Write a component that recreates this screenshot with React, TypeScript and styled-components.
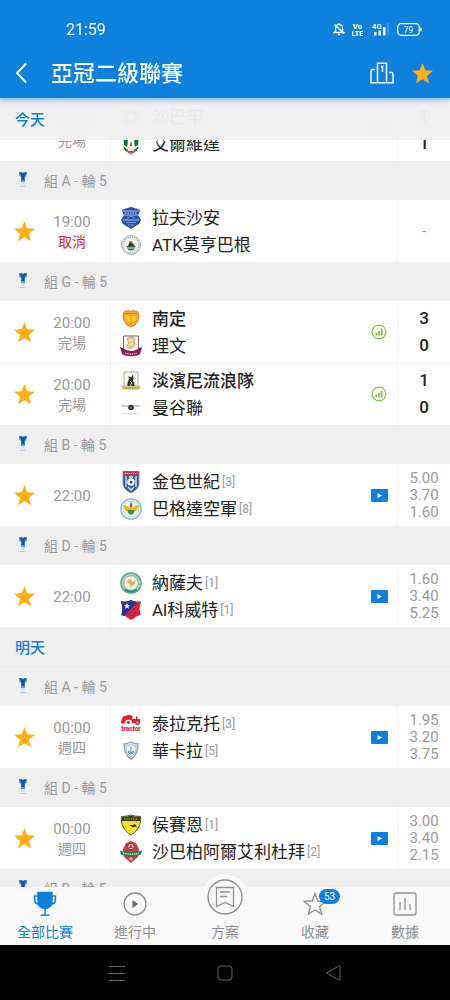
import React from 'react';
import styled, { createGlobalStyle } from 'styled-components';

const blue = '#0f80dc';
const amber = '#ffae1c';
const grey = '#999999';

const GlobalStyle = createGlobalStyle`
  * { box-sizing: border-box; }
  body {
    margin: 0;
    background: #ffffff;
    font-family: Roboto, "Noto Sans CJK TC", sans-serif;
    color: #222222;
  }
  button { border: 0; padding: 0; background: none; font: inherit; color: inherit; cursor: pointer; }
  a { color: inherit; text-decoration: none; }
  ul { list-style: none; margin: 0; padding: 0; }
  h1, h2, h3, p { margin: 0; }
  svg { display: block; flex: none; }
`;

const Shell = styled.div`
  display: flex;
  flex-direction: column;
  height: 100vh;
`;

const Header = styled.header`
  position: relative;
  z-index: 2;
  flex: none;
  background: ${blue};
  color: #f2fbff;
  box-shadow: 0 1px 5px 1px rgba(70, 160, 235, 0.75);
`;

const StatusBar = styled.div`
  display: flex;
  align-items: center;
  justify-content: space-between;
  height: 50px;
  padding: 8px 28px 0 66px;
  font-size: 16px;
`;

const StatusIcons = styled.div`
  display: flex;
  align-items: center;
  gap: 7px;
`;

const Toolbar = styled.div`
  display: flex;
  align-items: center;
  height: 48px;
  padding: 0 16px 2px 15px;
`;

const Title = styled.h1`
  flex: 1;
  margin-left: 24px;
  padding-top: 2px;
  font-size: 22px;
  line-height: 32px;
  font-weight: 500;
`;

const IconButton = styled.button`
  display: flex;
  margin-left: ${(p: { $gap?: number }) => p.$gap ?? 0}px;
`;

const Scroller = styled.main`
  flex: 1;
  min-height: 0;
  overflow-y: auto;
  scrollbar-width: none;
  background: #efefef;
`;

const DayHeading = styled.h2<{ $pinned?: boolean }>`
  display: flex;
  align-items: center;
  height: ${p => (p.$pinned ? 42 : 40)}px;
  padding: 2px 15px 0;
  font-size: 15px;
  line-height: 20px;
  font-weight: 500;
  color: ${blue};
  background: #f0f0f0;
  border-bottom: 1px solid #ebebeb;
  ${p =>
    p.$pinned &&
    `
    position: sticky;
    top: 0;
    z-index: 1;
    margin-bottom: -41px;
    background: rgba(240, 240, 240, 0.96);
    border-bottom: 0;
  `}
`;

const GroupHeading = styled.h3`
  display: flex;
  align-items: center;
  gap: 12px;
  height: 39px;
  padding: 0 14px;
  font-size: 14px;
  line-height: 20px;
  font-weight: 400;
  color: ${grey};
  background: #efefef;
`;

const MatchRow = styled.li`
  display: grid;
  grid-template-columns: 48px 63px minmax(0, 1fr) 37px 52px;
  align-items: stretch;
  height: 62px;
  background: #ffffff;

  & + & { box-shadow: inset 0 1px #f4f4f4; }
`;

const Favourite = styled.button`
  display: flex;
  align-items: center;
  justify-content: center;
`;

const Kickoff = styled.div`
  display: flex;
  flex-direction: column;
  justify-content: center;
  align-items: center;
  padding: 2px 14px 0 0;
  border-right: 1px solid #f0f0f0;
  line-height: 20px;
  color: ${grey};
`;

const Clock = styled.time`
  font-size: 15px;
`;

const State = styled.span<{ $alert?: boolean }>`
  font-size: 14px;
  color: ${p => (p.$alert ? '#d8283c' : 'inherit')};
`;

const Teams = styled.div`
  display: flex;
  flex-direction: column;
  justify-content: center;
  padding-left: 9px;
`;

const Team = styled.div<{ $winner?: boolean }>`
  display: flex;
  align-items: center;
  height: 27px;
  font-size: 17px;
  line-height: 27px;
  white-space: nowrap;
  font-weight: ${p => (p.$winner ? 500 : 400)};
`;

const TeamName = styled.span`
  margin-left: 10px;
  padding-top: 2px;
`;

const Rank = styled.span`
  margin-left: 2px;
  padding-top: 2px;
  font-size: 12px;
  font-weight: 400;
  color: ${grey};
`;

const Media = styled.div`
  display: flex;
  align-items: center;
  justify-content: center;
  border-right: 1px solid #f4f4f4;
`;

const Figures = styled.div`
  display: flex;
  flex-direction: column;
  justify-content: center;
  align-items: center;
`;

const Score = styled.span`
  font-size: 17px;
  line-height: 27px;
  font-weight: 500;
`;

const Odds = styled.span`
  font-size: 15px;
  line-height: 17px;
  color: ${grey};
`;

const TabBar = styled.nav`
  position: relative;
  z-index: 2;
  flex: none;
  display: grid;
  grid-template-columns: repeat(5, minmax(0, 1fr));
  grid-template-rows: minmax(0, 1fr);
  height: 58px;
  background: #f9f9f9;
  color: #8e8e8e;
`;

const Tab = styled.a<{ $active?: boolean }>`
  display: flex;
  flex-direction: column;
  align-items: center;
  justify-content: flex-end;
  gap: 4px;
  min-height: 0;
  padding-bottom: 3px;
  font-size: 14px;
  line-height: 20px;
  color: ${p => (p.$active ? blue : 'inherit')};
`;

const TabIcon = styled.span`
  position: relative;
  display: flex;
  flex: none;
  align-items: center;
  justify-content: center;
  width: 28px;
  height: 28px;
`;

const RaisedIcon = styled.span`
  display: flex;
  flex: none;
  align-items: center;
  justify-content: center;
  width: 46px;
  height: 46px;
  margin-bottom: -2px;
  border-radius: 50%;
  background: #f9f9f9;
`;

const Badge = styled.span`
  position: absolute;
  top: -1px;
  left: 18px;
  width: 21px;
  border-radius: 8px;
  background: ${blue};
  color: #ffffff;
  font-size: 10px;
  line-height: 15px;
  text-align: center;
`;

const SystemBar = styled.div`
  flex: none;
  display: grid;
  grid-template-columns: 1fr repeat(3, 24%) 1fr;
  height: 55px;
  background: #000000;
`;

const SystemButton = styled.button`
  display: flex;
  align-items: center;
  justify-content: center;
`;

const StarShape = ({ size = 23 }: { size?: number }) => (
  <svg width={size} height={size} viewBox="0 0 24 24" fill={amber} aria-hidden="true">
    <path d="M12 1l2.900 7.700 8.100.4-6.300 5.200 2.100 8L12 17.900 5.200 22.300l2.100-8L1 9.100l8.100-.4z" />
  </svg>
);

const GroupCup = () => (
  <svg width="18" height="18" viewBox="0 0 18 18" aria-hidden="true">
    <path d="M5 0h2.600l1.400 1.500L10.400 0H13v3l-2 2.500V10H7V5.500L5 3z" fill="#5a9bdc" />
    <path d="M5.500.5h3L9 2l.5-1.500h3l-2 4V8H7.500V4.500z" fill="#1450a8" />
    <path d="M7 10h4v3H7z" fill="#cfe3f8" />
    <path d="M6 14h6v1H6z" fill="#c3ccd6" />
  </svg>
);

const StatsIcon = () => (
  <svg width="16" height="16" viewBox="0 0 16 16" fill="none" stroke="#8bc34a" role="img" aria-label="統計">
    <circle cx="8" cy="8" r="6.900" strokeWidth="1.300" />
    <path d="M5.400 8.500v3M8 7v4.500M10.600 4.500v7" strokeWidth="1.900" />
  </svg>
);

const VideoIcon = () => (
  <svg width="17" height="13" viewBox="0 0 17 13" role="img" aria-label="影片">
    <rect width="17" height="13" rx="1" fill={blue} />
    <path d="M6.500 4l4.500 2.500L6.500 9z" fill="#ffffff" />
  </svg>
);

const crests: Record<string, React.ReactNode> = {
  sabah: (
    <>
      <circle cx="11" cy="11" r="9.500" fill="#d8cfa0" />
      <circle cx="11" cy="11" r="6" fill="#8a7c50" />
      <circle cx="11" cy="11" r="3" fill="#ffffff" />
    </>
  ),
  arkadag: (
    <>
      <path d="M4 2h14v13l-7 5-7-5z" fill="#ffffff" />
      <path d="M3 3h4c1 4 1 8 0 11l-3-2zM19 3h-4c-1 4-1 8 0 11l3-2z" fill="#12703a" />
      <path d="M3 13l4 3h8l4-3-2 5-6 2-6-2z" fill="#1c7a45" />
      <path d="M7 13l4 3 4-3-1 5H8z" fill="#e9dfe0" />
      <path d="M6 17l5 2 5-2-2 3-3 1.500L8 20z" fill="#c96060" />
      <path d="M11 8l1.500 5h-3z" fill="#d63838" />
    </>
  ),
  ravshan: (
    <>
      <path d="M4 2l7-2 7 2 2 1-1 4-1 1 3 5-2 4-8 5-8-5-2-4 3-5-1-1-1-4z" fill="#2b4fa8" />
      <path d="M3 4h16M4 8h14M3 13h16" stroke="#aebfe8" strokeWidth="1" />
      <path d="M5 6h12" stroke="#dce5fa" strokeWidth="1" strokeDasharray="1.500 1" />
      <path d="M7 11l4-2 4 2M6 15.500h10M8 18h6" stroke="#7e9ae0" strokeWidth="1" fill="none" />
    </>
  ),
  atk: (
    <>
      <circle cx="11" cy="11" r="9.500" fill="#f6f6f6" stroke="#a9b0ab" strokeWidth="1" />
      <circle cx="11" cy="11" r="7.900" fill="none" stroke="#a4aca6" strokeWidth="1.600" strokeDasharray="1 1" />
      <path d="M6.500 12h9a4.500 4.500 0 01-9 0z" fill="#1f7a4a" />
      <path d="M8 12l2-5 2 2 3 3z" fill="#4a2c1c" />
      <path d="M11 7l3 4" stroke="#d65a35" strokeWidth="1" />
      <path d="M7 14h8" stroke="#ffffff" strokeWidth=".8" />
    </>
  ),
  namdinh: (
    <>
      <path d="M4 4l4-1.500 3 1 3-1L18 4l1 4-1 5-3 4-4 2-4-2-3-4-1-5z" fill="#f7a825" stroke="#e07c4a" strokeWidth="1" />
      <path d="M5 5.500h12" stroke="#dd5a38" strokeWidth="1.200" strokeDasharray="1.500 .6" />
      <path d="M6 8h4.500v7L7 12.500zM11.500 8H16l-1 4.500-3.500 2.500z" fill="#ffd12e" />
      <path d="M11 8v9" stroke="#f0951c" strokeWidth="1" />
    </>
  ),
  leeman: (
    <>
      <path d="M3.500 1h15v13c-1 3-4 5-7.500 6-3.500-1-6.500-3-7.500-6z" fill="#fbf6ee" stroke="#6a5d85" strokeWidth="1" />
      <path d="M7 4c3-3 8-2 8 1l-1 2 1 2-3 4H8c-2-2-1-4 1-5z" fill="#f0cf88" stroke="#c4964a" strokeWidth=".8" />
      <path d="M9 6l3-1M9 9.500l4-1" stroke="#ffffff" strokeWidth="1" />
      <path d="M0 12l3 1c4 4 12 4 16 0l3-1-2 7c-4 3-14 3-18 0z" fill="#8a1656" />
      <path d="M5 18c4 1.500 8 1.500 12 0" stroke="#f2c9df" strokeWidth="1.200" fill="none" strokeDasharray="1.500 .8" />
    </>
  ),
  tampines: (
    <>
      <path d="M4 2h14v14H4z" fill="#f8f7ee" stroke="#b4b190" strokeWidth="1" />
      <path d="M7.500 16c0-4 .5-5 1.500-6.500L8.500 6l2.500 1.500L13 4.500l.5 4-.5 2.500c1.500 2 1.500 3 1.500 5z" fill="#34342b" />
      <path d="M10 11l2 2-2 3" stroke="#e7e1be" fill="none" strokeWidth="1" />
      <path d="M1 15.500l4 1h12l4-1-2 4H3z" fill="#cdbf56" />
      <path d="M5 18h12" stroke="#7e7534" strokeWidth=".8" strokeDasharray="1 .7" />
    </>
  ),
  bangkok: (
    <>
      <path d="M1 8h7l1 2-7-.3zM21 8h-7l-1 2 7-.3z" fill="#c3c6ca" />
      <circle cx="11" cy="10.500" r="2.800" fill="#2c2f36" />
      <circle cx="11" cy="10.500" r="1" fill="#7f8997" />
      <path d="M2 16.500h18" stroke="#e0e2e5" strokeWidth="1" />
    </>
  ),
  altyn: (
    <>
      <path d="M3 0h16v13c0 4-4 7-8 9-4-2-8-5-8-9z" fill="#31599c" stroke="#8b93a8" strokeWidth=".8" />
      <path d="M3.500.5h15v4h-15z" fill="#c8384a" />
      <path d="M5 2.500h12" stroke="#f5dada" strokeWidth="1.200" strokeDasharray="1.300 .7" />
      <path d="M6 5v11M16 5v11" stroke="#dfe8f5" strokeWidth="1.300" />
      <circle cx="11" cy="11" r="3.800" fill="#ffffff" />
      <path d="M11 9.500l1.500 1.200-.6 1.700h-1.800l-.6-1.700z" fill="#233a70" />
      <path d="M8 16l3 3 3-3M9 6.500l2-1 2 1" stroke="#c9dcf5" strokeWidth="1.600" fill="none" />
    </>
  ),
  airforce: (
    <>
      <circle cx="11" cy="11" r="10.200" fill="#e6f2f2" stroke="#8bb5c4" strokeWidth="1.200" />
      <circle cx="11" cy="11" r="7.800" fill="#fbfbf0" stroke="#b5d6da" strokeWidth=".8" />
      <path d="M3 7c3 0 5 1 6 3h4c1-2 3-3 6-3-1 5-4 7-6 8h-4c-2-1-5-3-6-8z" fill="#edb81e" />
      <path d="M7.500 12h7l-1 3.500-2.500 1.500-2.500-1.500z" fill="#3c8b4c" />
      <path d="M11 3.500l1.500 4h-3z" fill="#4b617a" />
      <circle cx="11" cy="8.500" r="1.300" fill="#d4413e" />
    </>
  ),
  nasaf: (
    <>
      <circle cx="11" cy="11" r="10.200" fill="#8cc0a8" stroke="#5aa78e" strokeWidth="1.200" />
      <circle cx="11" cy="11" r="8.400" fill="none" stroke="#eef6ee" strokeWidth="1" strokeDasharray="1 1" />
      <circle cx="11" cy="11" r="6.800" fill="#f6f1d4" />
      <path d="M7 9c2-3 5-2 5 0s3 0 3-1c1 4-2 7-5 6 1-2-2-2-3-5z" fill="#cdb66c" />
      <path d="M5 17.500c4 3 8 3 12 0" stroke="#2f8c74" strokeWidth="1.800" fill="none" />
    </>
  ),
  kuwait: (
    <>
      <path d="M1 2c3 1 6 1 10-1 4 2 7 2 10 1l-1.500 7 1 7c-2 1-5 1-6 3l-3.500 2-3.500-2c-1-2-4-2-6-3l1-7z" fill="#dd2238" />
      <path d="M1 2c3 1 6 1 10-1 3 1.500 5 2 7 1.500L3.500 17 1.500 16l1-7z" fill="#27318f" />
      <path d="M7 4l.9 2 2.100.2-1.600 1.400.5 2.100L7 8.600 5.100 9.700l.5-2.100L4 6.200 6.100 6z" fill="#ffffff" />
      <path d="M7 17l8-8" stroke="#8d2b66" strokeWidth="1" />
      <path d="M10 16a3 3 0 005-3" stroke="#9c1e3a" strokeWidth="1" fill="none" />
    </>
  ),
  tractor: (
    <g fill="#e01f2d">
      <path d="M1 10c0-4 2-6 3-7l5-1 4 1-1 2 2 5h-2a3.500 3.500 0 00-7 0l-2 1z" />
      <path d="M12 6h4V3.500h1.500V6H20v4h-7z" />
      <circle cx="8.300" cy="9.500" r="1.500" />
      <circle cx="17.500" cy="9.500" r="2.500" />
      <circle cx="17.500" cy="9.500" r="1" fill="#ffffff" />
      <text x="11" y="17.500" textAnchor="middle" fontSize="6.500" fontWeight="900" fontFamily="Roboto, sans-serif">tractor</text>
    </g>
  ),
  wakrah: (
    <>
      <path d="M4 4c3 0 5-1 7-2 2 1 4 2 7 2 0 7-2 12-7 15.500C6 16 4 11 4 4z" fill="#dbe6ea" stroke="#969ea2" strokeWidth="1.300" />
      <path d="M6 6c2 0 3.500-.7 5-1.300C12.500 5.300 14 6 16 6c0 5-1.500 8.500-5 11C7.500 14.500 6 11 6 6z" fill="#f2fafb" stroke="#8dbcc9" strokeWidth=".8" />
      <path d="M11 6.500V12M8.500 11c0 4 5 4 5 0L11 13z" stroke="#4d9db4" strokeWidth="1" fill="#9ed2df" />
    </>
  ),
  sepahan: (
    <>
      <path d="M1.500 2.500C5 2.500 8 2 11 1c3 1 6 1.500 9.500 1.500C21.500 10 18 17 11 21 4 17 .5 10 1.500 2.500z" fill="#f6e02c" stroke="#5a562c" strokeWidth="1" />
      <path d="M2 3c3 0 6-.5 9-1.300C14 2.500 17 3 20 3v4H2z" fill="#3a3820" />
      <path d="M4 5h14" stroke="#c9b834" strokeWidth="1.200" strokeDasharray="1.500 .8" />
      <path d="M9 11l4 .3 2-1.300 2 3-2-.5-2 .8z" fill="#26251a" />
    </>
  ),
  shabab: (
    <>
      <path d="M6 2l5-2 5 2 3 6-1 8-7 6-7-6-1-8z" fill="#c4404c" />
      <circle cx="11" cy="5.500" r="3.300" fill="#e8c5c0" stroke="#8b1d2c" strokeWidth="1" />
      <path d="M11 3l1.500 4H9z" fill="#b02a3a" />
      <path d="M0 9.500c6 2 16 2 22 0l-1 4c-6 3-14 3-20 0z" fill="#2d7c48" />
      <path d="M3 12.200c5 1.300 11 1.300 16 0" stroke="#d9ead9" strokeWidth="1.300" fill="none" strokeDasharray="1.500 .7" />
      <circle cx="11" cy="17.800" r="1.800" fill="#dfa0a0" />
    </>
  ),
};

const Crest = ({ id }: { id: string }) => (
  <svg width="22" height="22" viewBox="0 0 22 22" aria-hidden="true">
    {crests[id]}
  </svg>
);

type Side = { name: string; crest: string; rank?: number; winner?: boolean };
type Fixture = {
  time: string;
  state?: string;
  cancelled?: boolean;
  home: Side;
  away: Side;
  media?: 'stats' | 'video';
  score?: string[];
  odds?: string[];
  starred?: boolean;
};

const Match = ({ time, state, cancelled, home, away, media, score, odds, starred = true }: Fixture) => (
  <MatchRow>
    <Favourite aria-label="收藏比賽" aria-pressed={starred}>
      {starred && <StarShape />}
    </Favourite>
    <Kickoff>
      <Clock>{time}</Clock>
      {state && <State $alert={cancelled}>{state}</State>}
    </Kickoff>
    <Teams>
      {[home, away].map(side => (
        <Team key={side.name} $winner={side.winner}>
          <Crest id={side.crest} />
          <TeamName>{side.name}</TeamName>
          {side.rank && <Rank>[{side.rank}]</Rank>}
        </Team>
      ))}
    </Teams>
    <Media>
      {media === 'stats' && <StatsIcon />}
      {media === 'video' && <VideoIcon />}
    </Media>
    <Figures>
      {score?.map((value, i) => <Score key={i}>{value}</Score>)}
      {odds?.map((value, i) => <Odds key={i}>{value}</Odds>)}
    </Figures>
  </MatchRow>
);

const Group = ({ name, matches = [] }: { name: string; matches?: Fixture[] }) => (
  <section>
    <GroupHeading>
      <GroupCup />
      組 {name} - 輪 5
    </GroupHeading>
    <ul>
      {matches.map(match => <Match key={match.home.name} {...match} />)}
    </ul>
  </section>
);

const earlier: Fixture = {
  time: '18:00',
  state: '完場',
  home: { name: '沙巴牢', crest: 'sabah' },
  away: { name: '艾爾維達', crest: 'arkadag' },
  media: 'stats',
  score: ['1', '1'],
  starred: false,
};

const today: { name: string; matches: Fixture[] }[] = [
  {
    name: 'A',
    matches: [
      {
        time: '19:00',
        state: '取消',
        cancelled: true,
        home: { name: '拉夫沙安', crest: 'ravshan' },
        away: { name: 'ATK莫亨巴根', crest: 'atk' },
        odds: ['-'],
      },
    ],
  },
  {
    name: 'G',
    matches: [
      {
        time: '20:00',
        state: '完場',
        home: { name: '南定', crest: 'namdinh', winner: true },
        away: { name: '理文', crest: 'leeman' },
        media: 'stats',
        score: ['3', '0'],
      },
      {
        time: '20:00',
        state: '完場',
        home: { name: '淡濱尼流浪隊', crest: 'tampines', winner: true },
        away: { name: '曼谷聯', crest: 'bangkok' },
        media: 'stats',
        score: ['1', '0'],
      },
    ],
  },
  {
    name: 'B',
    matches: [
      {
        time: '22:00',
        home: { name: '金色世紀', crest: 'altyn', rank: 3 },
        away: { name: '巴格達空軍', crest: 'airforce', rank: 8 },
        media: 'video',
        odds: ['5.00', '3.70', '1.60'],
      },
    ],
  },
  {
    name: 'D',
    matches: [
      {
        time: '22:00',
        home: { name: '納薩夫', crest: 'nasaf', rank: 1 },
        away: { name: 'Al科威特', crest: 'kuwait', rank: 1 },
        media: 'video',
        odds: ['1.60', '3.40', '5.25'],
      },
    ],
  },
];

const tomorrow: { name: string; matches?: Fixture[] }[] = [
  {
    name: 'A',
    matches: [
      {
        time: '00:00',
        state: '週四',
        home: { name: '泰拉克托', crest: 'tractor', rank: 3 },
        away: { name: '華卡拉', crest: 'wakrah', rank: 5 },
        media: 'video',
        odds: ['1.95', '3.20', '3.75'],
      },
    ],
  },
  {
    name: 'D',
    matches: [
      {
        time: '00:00',
        state: '週四',
        home: { name: '侯賽恩', crest: 'sepahan', rank: 1 },
        away: { name: '沙巴柏阿爾艾利杜拜', crest: 'shabab', rank: 2 },
        media: 'video',
        odds: ['3.00', '3.40', '2.15'],
      },
    ],
  },
  { name: 'B' },
];

export default function App() {
  return (
    <Shell>
      <GlobalStyle />
      <Header>
        <StatusBar>
          <span>21:59</span>
          <StatusIcons>
            <svg width="12" height="14" viewBox="0 0 12 14" fill="none" stroke="currentColor" strokeWidth="1.300" aria-hidden="true">
              <path d="M2.500 9.500V6a3.500 3.500 0 017 0v3.500l1.300 1H1.200zM6 1v1.500M5 12.500h2M1.500 2.500l9.500 9" />
            </svg>
            <svg width="11" height="14" viewBox="0 0 11 14" fill="currentColor" fontFamily="Roboto, sans-serif" fontWeight="900" textAnchor="middle" aria-hidden="true">
              <text x="5.500" y="6.500" fontSize="8">Vo</text>
              <text x="5.500" y="13.500" fontSize="7">LTE</text>
            </svg>
            <svg width="20" height="14" viewBox="0 0 20 14" fill="currentColor" aria-hidden="true">
              <text x="2" y="6.500" fontSize="8" fontWeight="700" fontFamily="Roboto, sans-serif">4G</text>
              <path d="M4 10h2.500v3.500H4zM8.500 8.500H11v5H8.500zM13 5h2.500v8.500H13z" />
              <path d="M17.500 1h1v12h-1z" opacity=".35" />
            </svg>
            <svg width="25" height="13" viewBox="0 0 25 13" aria-hidden="true">
              <rect x=".7" y=".7" width="21.600" height="11.600" rx="3.500" fill="none" stroke="currentColor" strokeWidth="1.300" />
              <path d="M23.300 4.500a2 2 0 010 4z" fill="currentColor" />
              <text x="11.500" y="9.500" fontSize="8.500" textAnchor="middle" fill="currentColor" fontFamily="Roboto, sans-serif">79</text>
            </svg>
          </StatusIcons>
        </StatusBar>
        <Toolbar>
          <IconButton aria-label="返回">
            <svg width="12" height="22" viewBox="0 0 12 22" fill="none" stroke="currentColor" strokeWidth="2" aria-hidden="true">
              <path d="M11 1.500L2 11l9 9.500" />
            </svg>
          </IconButton>
          <Title>亞冠二級聯賽</Title>
          <IconButton aria-label="排名">
            <svg width="24" height="22" viewBox="0 0 24 22" fill="none" stroke="currentColor" strokeWidth="1.500" aria-hidden="true">
              <path d="M7.500 20.700V1.200h9v19.500M5 7.500H2.500Q1 7.500 1 9v11.700h22V12q0-1.500-1.500-1.500H19M11 5.200l1.500-.7v5.500" />
            </svg>
          </IconButton>
          <IconButton $gap={17} aria-label="收藏聯賽">
            <StarShape />
          </IconButton>
        </Toolbar>
      </Header>

      <Scroller>
        <section>
          <DayHeading $pinned>今天</DayHeading>
          <ul>
            <Match {...earlier} />
          </ul>
          {today.map(group => <Group key={group.name} {...group} />)}
        </section>
        <section>
          <DayHeading>明天</DayHeading>
          {tomorrow.map(group => <Group key={group.name} {...group} />)}
        </section>
      </Scroller>

      <TabBar>
        <Tab href="#all" $active>
          <TabIcon>
            <svg width="24" height="26" viewBox="0 0 24 26" fill="none" stroke="currentColor" strokeWidth="1.500" aria-hidden="true">
              <path d="M5 1.500h14v9c0 4-3 7-7 7s-7-3-7-7z" fill="currentColor" />
              <path d="M5 5H1.500c0 5 0 8 4.500 8M19 5h3.500c0 5 0 8-4.500 8M12 17v7M7.500 24.200h9" />
            </svg>
          </TabIcon>
          全部比賽
        </Tab>
        <Tab href="#live">
          <TabIcon>
            <svg width="24" height="24" viewBox="0 0 24 24" aria-hidden="true">
              <circle cx="12" cy="12" r="11" fill="none" stroke="currentColor" strokeWidth="1.300" />
              <path d="M9.500 8l5.500 4-5.500 4z" fill="#666666" />
            </svg>
          </TabIcon>
          進行中
        </Tab>
        <Tab href="#plans">
          <RaisedIcon>
            <svg width="36" height="36" viewBox="0 0 36 36" fill="none" stroke="currentColor" strokeWidth="1.300" aria-hidden="true">
              <circle cx="18" cy="18" r="17" />
              <path d="M9.500 8.500h17v19L18 23.500l-8.500 4zM13 13h10M13 17.500h7" />
            </svg>
          </RaisedIcon>
          方案
        </Tab>
        <Tab href="#favourites">
          <TabIcon>
            <svg width="24" height="24" viewBox="0 0 24 24" fill="none" stroke="currentColor" strokeWidth="1.300" aria-hidden="true">
              <path d="M12 1.500l2.800 7.500 8 .4-6.300 5 2.200 7.900L12 18l-6.700 4.300 2.200-7.900-6.300-5 8-.4z" />
            </svg>
            <Badge>53</Badge>
          </TabIcon>
          收藏
        </Tab>
        <Tab href="#data">
          <TabIcon>
            <svg width="24" height="24" viewBox="0 0 24 24" fill="none" stroke="currentColor" strokeWidth="1.300" aria-hidden="true">
              <rect x="1" y="1" width="22" height="22" rx="2" />
              <path d="M7 10v8M12 6v12M17 12v6" />
            </svg>
          </TabIcon>
          數據
        </Tab>
      </TabBar>

      <SystemBar>
        <span />
        <SystemButton aria-label="多工">
          <svg width="16" height="16" viewBox="0 0 16 16" stroke="#666666" aria-hidden="true">
            <path d="M0 1.500h16M0 8.500h16M0 15.500h16" />
          </svg>
        </SystemButton>
        <SystemButton aria-label="主畫面">
          <svg width="16" height="16" viewBox="0 0 16 16" fill="none" stroke="#666666" aria-hidden="true">
            <rect x="1" y="1" width="14" height="14" rx="3" />
          </svg>
        </SystemButton>
        <SystemButton aria-label="返回">
          <svg width="16" height="16" viewBox="0 0 16 16" fill="none" stroke="#666666" strokeLinejoin="round" aria-hidden="true">
            <path d="M15 2v12q0 1.500-1.500.8L1.500 8l12-6.800Q15 .5 15 2z" />
          </svg>
        </SystemButton>
      </SystemBar>
    </Shell>
  );
}
